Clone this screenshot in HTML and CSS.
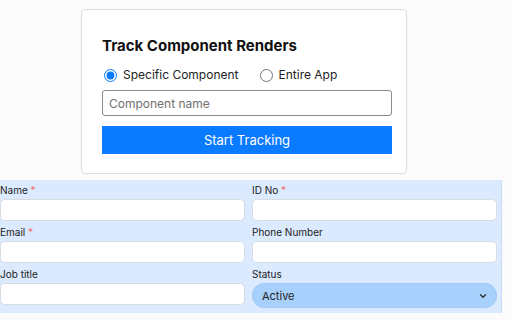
FILE: index.html
```html
<!DOCTYPE html>
<html>
<head>
    <title>Track Component Renders</title>
    <link rel="stylesheet" href="styles.css">
</head>
<body>
    <div class="tracker-card">
        <h2>Track Component Renders</h2>

        <div class="mode-options">
            <label class="mode-option">
                <input type="radio" name="mode" value="component" checked>
                <span>Specific Component</span>
            </label>
            <label class="mode-option">
                <input type="radio" name="mode" value="app">
                <span>Entire App</span>
            </label>
        </div>

        <input class="component-input" type="text" placeholder="Component name">
        <button class="track-button">Start Tracking</button>
    </div>

    <!-- Employee form -->
    <form class="employee-form">
        <div class="form-field">
            <label>Name <span class="required">*</span></label>
            <input type="text">
        </div>
        <div class="form-field">
            <label>ID No <span class="required">*</span></label>
            <input type="text">
        </div>
        <div class="form-field">
            <label>Email <span class="required">*</span></label>
            <input type="text">
        </div>
        <div class="form-field">
            <label>Phone Number</label>
            <input type="text">
        </div>
        <div class="form-field">
            <label>Job title</label>
            <input type="text">
        </div>
        <div class="form-field">
            <label>Status</label>
            <div class="status-select">
                <span>Active</span>
                <svg width="8" height="6" viewBox="0 0 8 6"><path d="M1.5 1.8 L4 4.2 L6.5 1.8" fill="none" stroke="#333" stroke-width="1.3" stroke-linecap="round" stroke-linejoin="round"/></svg>
            </div>
        </div>
    </form>
</body>
</html>
```

FILE: styles.css
```css
body {
    margin: 0;
    background-color: #fbfbfb;
    font-family: Inter, "Noto Sans", sans-serif;
    color: #111;
}

/* Tracker card */
.tracker-card {
    width: 290px;
    margin: 9px 0 0 81px;
    padding: 26px 14px 19px 20px;
    background-color: white;
    border: 1px solid #dcdcdc;
    border-radius: 4px;
}

.tracker-card h2 {
    margin: 0 0 9px;
    font-size: 15px;
    font-weight: 700;
    line-height: 20px;
}

.mode-options {
    display: flex;
    gap: 19px;
    margin-bottom: 5px;
}

.mode-option {
    display: flex;
    align-items: center;
    gap: 6px;
    font-size: 12px;
    line-height: 20px;
    color: #222;
}

.mode-option input {
    width: 13px;
    height: 13px;
    margin: 0 0 0 2px;
    accent-color: #0a7aff;
}

.component-input {
    display: block;
    box-sizing: border-box;
    width: 100%;
    height: 26px;
    margin: 0 0 10px;
    padding: 0 6px;
    border: 1px solid #8a8a8a;
    border-radius: 3px;
    font-family: inherit;
    font-size: 12px;
}

.component-input::placeholder {
    color: #6f6f6f;
}

.track-button {
    display: block;
    width: 100%;
    height: 28px;
    border: none;
    background-color: #0a7aff;
    color: white;
    font-family: inherit;
    font-size: 13px;
    cursor: pointer;
}

/* Employee form */
.employee-form {
    display: grid;
    grid-template-columns: 245px 245px;
    column-gap: 7px;
    row-gap: 4px;
    width: 497px;
    margin-top: 6px;
    padding: 3px 4px 5px 0;
    background-color: #dbeafe;
    border-right: 1px solid #c9dcf5;
}

.form-field label {
    display: block;
    height: 14px;
    margin-bottom: 2px;
    font-size: 10px;
    line-height: 14px;
    color: #222;
}

.required {
    color: #f26d6d;
}

.form-field input {
    display: block;
    box-sizing: border-box;
    width: 100%;
    height: 22px;
    border: 1px solid #d8dde4;
    border-radius: 5px;
    background-color: white;
}

.status-select {
    display: flex;
    align-items: center;
    justify-content: space-between;
    box-sizing: border-box;
    height: 25px;
    padding: 0 9px;
    background-color: #a8d0fc;
    border: 1px solid #a0c9f8;
    border-radius: 12px;
    font-size: 11px;
    color: #222;
}
```
